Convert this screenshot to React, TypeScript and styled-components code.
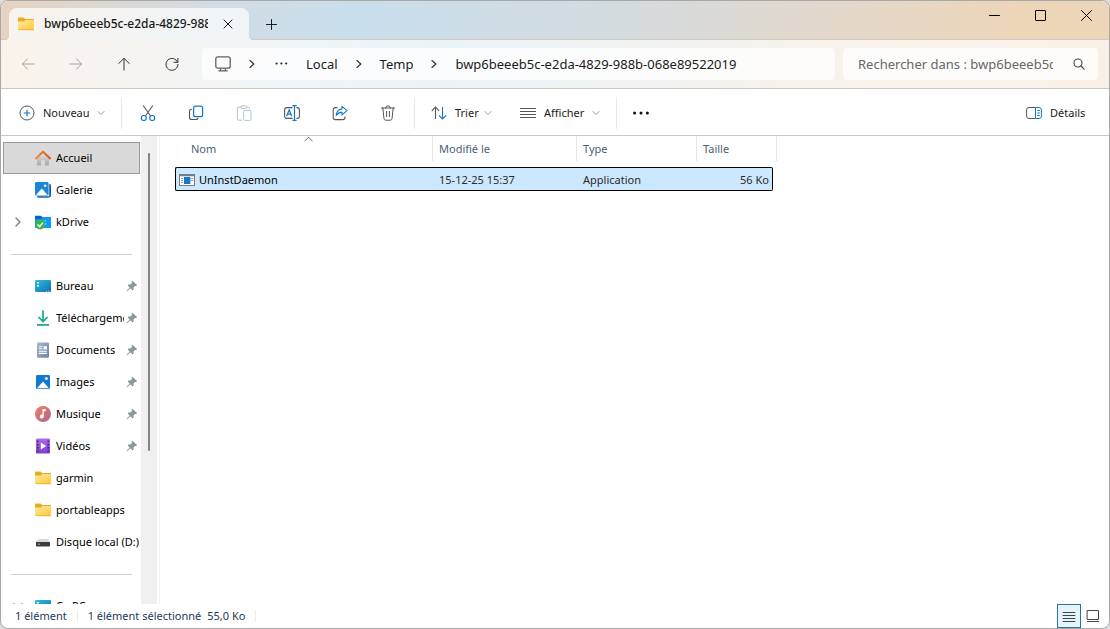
import React from 'react';
import styled, { createGlobalStyle, css } from 'styled-components';

const GlobalStyle = createGlobalStyle`
  * { box-sizing: border-box; }
  body {
    margin: 0;
    background: #dcdde0;
    font-family: 'Noto Sans', 'Open Sans', sans-serif;
    font-size: 11px;
    line-height: 16px;
    color: #1b1b1b;
  }
  button, input { font: inherit; color: inherit; }
  a { color: inherit; text-decoration: none; }
  svg { display: block; flex: none; }
`;

const Window = styled.div`
  display: flex;
  flex-direction: column;
  height: 100vh;
  border: 1px solid #a8a8a8;
  border-radius: 8px;
  overflow: hidden;
  background: #fff;
`;

const PlainButton = styled.button`
  display: flex;
  align-items: center;
  justify-content: center;
  border: 0;
  padding: 0;
  background: none;
`;

/* Title bar */

const TitleBar = styled.header`
  display: flex;
  align-items: flex-end;
  height: 39px;
  flex: none;
  padding-left: 8px;
  border-bottom: 1px solid #d3cbbf;
  background: linear-gradient(100deg, #e6d3c0 0%, #d3dce2 18%, #c8deed 32%, #d3dbdf 55%, #e4d8ca 76%, #edd5b8 92%);
`;

const Tab = styled.div`
  position: relative;
  display: flex;
  align-items: center;
  width: 240px;
  height: 32px;
  margin-bottom: -1px;
  padding: 0 11px 0 9px;
  border-radius: 8px 8px 0 0;
  background: linear-gradient(100deg, #f8f3ed, #f0f4f6 80%);

  &::before, &::after {
    content: '';
    position: absolute;
    bottom: 0;
    width: 4px;
    height: 4px;
  }
  &::before { left: -4px; background: radial-gradient(circle at 0 0, transparent 4px, #f9f3ec 4px); }
  &::after { right: -4px; background: radial-gradient(circle at 100% 0, transparent 4px, #f0f4f6 4px); }
`;

const TabTitle = styled.span`
  flex: 1;
  margin: 0 10px;
  overflow: hidden;
  white-space: nowrap;
  font-size: 12px;
  font-weight: 500;
`;

const TabClose = styled(PlainButton)`
  width: 20px;
  height: 20px;
`;

const NewTab = styled(PlainButton)`
  width: 32px;
  height: 30px;
  margin-left: 6px;
`;

const WindowControls = styled.div`
  display: flex;
  align-self: flex-start;
  margin-left: auto;
`;

const WindowButton = styled(PlainButton)`
  width: 46px;
  height: 28px;
`;

/* Navigation bar */

const NavBar = styled.nav`
  display: flex;
  align-items: center;
  flex: none;
  height: 49px;
  padding: 0 11px;
  border-bottom: 1px solid #cfc8be;
  background: linear-gradient(100deg, #faf3eb 0%, #f2f4f5 20%, #ebf3f7 38%, #f1f2f2 58%, #f8f2eb 78%, #f9f1e8 100%);
`;

const NavButtons = styled.div`
  display: flex;
  gap: 16px;
  margin-right: 14px;
`;

const NavButton = styled(PlainButton)`
  width: 32px;
  height: 32px;
  color: #333;
  &:disabled { color: #a9a6a3; }
`;

const fieldBox = css`
  display: flex;
  align-items: center;
  height: 32px;
  border-radius: 4px;
  background: rgba(255, 255, 255, 0.75);
  font-size: 13px;
`;

const AddressBar = styled.div`
  ${fieldBox}
  flex: 1;
  min-width: 0;
  gap: 17px;
  padding-left: 13px;
  white-space: nowrap;
  overflow: hidden;
`;

const SearchBox = styled.label`
  ${fieldBox}
  width: 255px;
  margin-left: 8px;
  padding: 0 13px 0 15px;
  gap: 20px;
  color: #5f5f5f;
`;

const SearchInput = styled.input`
  flex: 1;
  min-width: 0;
  border: 0;
  padding: 0;
  outline: 0;
  background: none;
  &::placeholder { color: #666; opacity: 1; }
`;

/* Command bar */

const CommandBar = styled.div`
  display: flex;
  align-items: center;
  flex: none;
  height: 47px;
  padding: 2px 14px 0 10px;
  border-bottom: 1px solid #cfc8be;
  background: #fff;
`;

const MenuButton = styled.button<{ $width: number }>`
  display: flex;
  align-items: center;
  gap: 8px;
  width: ${(p) => p.$width}px;
  height: 32px;
  border: 0;
  padding: 0 8px;
  background: none;
  white-space: nowrap;
`;

const MenuLabel = styled.span`
  flex: 1;
  min-width: 0;
  text-align: left;
`;

const ViewMenus = styled.div`
  display: flex;
  gap: 12px;
`;

const Separator = styled.span`
  width: 1px;
  height: 32px;
  margin: 0 8px;
  background: #e8e8e8;
`;

const Tools = styled.div`
  display: flex;
  gap: 16px;
  margin: 0 2px;
`;

const ToolButton = styled(PlainButton)`
  width: 32px;
  height: 32px;
`;

const DetailsSlot = styled.div`
  margin-left: auto;
`;

/* Body */

const Body = styled.div`
  display: flex;
  flex: 1;
  min-height: 0;
`;

const Sidebar = styled.aside`
  display: flex;
  width: 159px;
  flex: none;
  border-right: 1px solid #f3f3f3;
  overflow: hidden;
`;

const Tree = styled.ul`
  flex: 1;
  min-width: 0;
  margin: 0;
  padding: 6px 1px 0 2px;
  list-style: none;
`;

const TreeItem = styled.li<{ $selected?: boolean }>`
  display: flex;
  align-items: center;
  height: 32px;
  padding-left: 8px;
  border: 1px solid ${(p) => (p.$selected ? '#999' : 'transparent')};
  background: ${(p) => (p.$selected ? '#d9d9d9' : 'none')};
`;

const Expander = styled.span`
  width: 23px;
  flex: none;
`;

const TreeLink = styled.a`
  display: flex;
  align-items: center;
  flex: 1;
  min-width: 0;
  gap: 5px;
  color: #000;
`;

const TreeLabel = styled.span`
  flex: 1;
  overflow: hidden;
  white-space: nowrap;
`;

const PinSlot = styled.span`
  margin: 0 1px 0 2px;
`;

const TreeDivider = styled.li`
  height: 32px;
  padding: 16px 8px 0;
  &::before {
    content: '';
    display: block;
    height: 1px;
    background: #cfcfcf;
  }
`;

const ScrollTrack = styled.div`
  width: 16px;
  margin-right: 2px;
  padding: 17px 7px 0;
  background: #f0f0f0;
`;

const ScrollThumb = styled.div`
  height: 66%;
  border-radius: 1px;
  background: #858585;
`;

const Content = styled.main`
  flex: 1;
  min-width: 0;
  padding-left: 15px;
`;

const FileTable = styled.table`
  width: 602px;
  table-layout: fixed;
  border-collapse: separate;
  border-spacing: 0;
`;

const HeadCell = styled.th<{ $indent?: number }>`
  position: relative;
  height: 25px;
  padding: 0 0 0 ${(p) => p.$indent ?? 6}px;
  border-right: 1px solid #e5e5e5;
  text-align: left;
  font-weight: 400;
  color: #4c607a;
`;

const SortMark = styled.span`
  position: absolute;
  top: 0;
  left: 129px;
`;

const Spacer = styled.tr`
  height: 6px;
  td { padding: 0; }
`;

const FileRow = styled.tr`
  td {
    height: 24px;
    padding: 1px 0 0 6px;
    border: solid #000;
    border-width: 1px 0;
    background: #cce8ff;
    color: #2b2b2b;
  }
  td:first-child {
    padding-left: 3px;
    border-left-width: 1px;
    border-radius: 2px 0 0 2px;
    color: #000;
  }
  td:last-child {
    padding-right: 3px;
    border-right-width: 1px;
    border-radius: 0 2px 2px 0;
    text-align: right;
  }
`;

const FileName = styled.span`
  display: flex;
  align-items: center;
  gap: 4px;
`;

/* Status bar */

const StatusBar = styled.footer`
  display: flex;
  align-items: center;
  flex: none;
  height: 24px;
  padding: 0 4px 0 14px;
  color: #1e395b;
`;

const StatusText = styled.span`
  display: flex;
  gap: 6px;
  padding-right: 10px;
  margin-right: 10px;
  border-right: 1px solid #ededed;
  line-height: 12px;
  white-space: nowrap;
`;

const ViewSwitch = styled.div`
  display: flex;
  margin-left: auto;
`;

const ViewButton = styled(PlainButton)<{ $active?: boolean }>`
  width: 24px;
  height: 24px;
  border: 1px solid ${(p) => (p.$active ? '#2673ab' : 'transparent')};
  background: ${(p) => (p.$active ? '#e5f3fb' : 'none')};
`;

/* Icons */

type StrokeProps = { d: string; size?: number; color?: string; width?: number };
const Stroke = ({ d, size = 16, color = 'currentColor', width = 1 }: StrokeProps) => (
  <svg width={size} height={size} viewBox={`0 0 ${size} ${size}`} fill="none" stroke={color} strokeWidth={width} strokeLinecap="round" strokeLinejoin="round">
    <path d={d} />
  </svg>
);

const INK = '#555';
const BLUE = '#0f78c8';

const Chevron = () => <Stroke size={8} d="M2 0.5 L5.8 4 L2 7.5" color="#333" width={1.2} />;
const DownChevron = () => <Stroke size={8} d="M1 2.5 L4 5.5 L7 2.5" color="#999" />;

const Dots = () => (
  <svg width="16" height="16" viewBox="0 0 16 16" fill="#222">
    <circle cx="3.6" cy="7.5" r="1.1" /><circle cx="8.4" cy="7.5" r="1.1" /><circle cx="13.2" cy="7.5" r="1.1" />
  </svg>
);

const BigDots = () => (
  <svg width="16" height="16" viewBox="0 0 16 16" fill="#111">
    <circle cx="1.6" cy="8" r="1.5" /><circle cx="8" cy="8" r="1.5" /><circle cx="14.4" cy="8" r="1.5" />
  </svg>
);

const FolderIcon = () => (
  <svg width="16" height="16" viewBox="0 0 16 16">
    <defs>
      <linearGradient id="folder" x1="0" y1="0" x2="1" y2="1">
        <stop offset="0" stopColor="#ffe9a2" /><stop offset="1" stopColor="#ffc937" />
      </linearGradient>
    </defs>
    <path d="M0 2.4 Q0 1.5 1 1.5 H5.4 L7.2 3 H15 Q16 3 16 4 V8 H0 Z" fill="#e8ae22" />
    <path d="M0 5.4 H6 L7.6 4 H15.2 Q16 4 16 4.9 V13 Q16 14 15 14 H1 Q0 14 0 13 Z" fill="url(#folder)" />
    <path d="M0.5 13.7 H15.5" stroke="#dfa42a" strokeWidth="0.7" />
  </svg>
);

const MonitorIcon = () => (
  <svg width="16" height="16" viewBox="0 0 16 16" fill="none" stroke="#606060" strokeWidth="1.3">
    <rect x="0.8" y="0.8" width="14.4" height="11.4" rx="2" />
    <path d="M5.5 12.5 V14.6 M10.5 12.5 V14.6 M3.4 14.9 H12.6" />
  </svg>
);

const RefreshIcon = () => <Stroke d="M13.6 6.2 A6 6 0 1 0 14 8.4 M13.9 2.4 V6.3 H10" />;

const SearchIcon = () => (
  <svg width="12" height="12" viewBox="0 0 12 12" fill="none" stroke="#444" strokeWidth="1.1" strokeLinecap="round">
    <circle cx="5" cy="5" r="4" /><path d="M8 8 L11.2 11.2" />
  </svg>
);

const PlusCircle = () => (
  <svg width="16" height="16" viewBox="0 0 16 16" fill="none">
    <circle cx="8" cy="8" r="7" stroke={INK} /><path d="M8 4.8 V11.2 M4.8 8 H11.2" stroke={BLUE} strokeWidth="1.2" />
  </svg>
);

const CutIcon = () => (
  <svg width="16" height="16" viewBox="0 0 16 16" fill="none">
    <path d="M3.2 0.5 L10.6 11 M12.8 0.5 L5.4 11" stroke={INK} strokeWidth="1.1" />
    <circle cx="3.8" cy="13" r="2.5" stroke={BLUE} strokeWidth="1.2" /><circle cx="12.2" cy="13" r="2.5" stroke={BLUE} strokeWidth="1.2" />
  </svg>
);

const CopyIcon = () => (
  <svg width="16" height="16" viewBox="0 0 16 16" fill="none">
    <path d="M4 4.2 H3.3 Q1.5 4.4 1.5 6.2 V12.2 Q1.5 14.5 3.7 14.5 H8 Q9.6 14.5 10 13" stroke={INK} strokeWidth="1.1" />
    <rect x="5.6" y="1.1" width="9" height="10.6" rx="2" stroke={BLUE} strokeWidth="1.2" />
  </svg>
);

const PasteIcon = () => (
  <svg width="16" height="16" viewBox="0 0 16 16" fill="none">
    <path d="M4.8 2.2 H2.5 Q1.4 2.2 1.4 3.3 V14 Q1.4 15.2 2.6 15.2 H6 M10.8 2.2 H12.4 Q13.5 2.2 13.5 3.5 V4.6" stroke="#bdbdbd" />
    <rect x="4.8" y="0.8" width="6" height="2.6" rx="1.2" stroke="#bdbdbd" />
    <rect x="7.6" y="5.4" width="7.4" height="10" rx="1.2" stroke="#a3cbea" />
  </svg>
);

const RenameIcon = () => (
  <svg width="16" height="16" viewBox="0 0 16 16" fill="none">
    <path d="M8.6 2.6 H2.8 Q0.6 2.6 0.6 5 V11 Q0.6 13.4 2.8 13.4 H8.6 M12.4 2.6 H13.2 Q15.4 2.6 15.4 5 V11 Q15.4 13.4 13.2 13.4 H12.4" stroke={INK} strokeWidth="1.1" />
    <path d="M8.4 0.6 H12.6 M8.4 15.4 H12.6 M10.5 0.6 V15.4" stroke={BLUE} strokeWidth="1.2" />
    <path d="M2.6 11.2 L5.2 4.8 L7.8 11.2 M3.5 9.2 H6.9" stroke={BLUE} strokeWidth="1.2" />
  </svg>
);

const ShareIcon = () => (
  <svg width="16" height="16" viewBox="0 0 16 16" fill="none" strokeLinejoin="round">
    <path d="M5.5 2.6 H3.6 Q1.2 2.6 1.2 5 V12.2 Q1.2 14.6 3.6 14.6 H10.6 Q13 14.6 13 12.2 V11.4" stroke={INK} strokeWidth="1.1" />
    <path d="M10 1.4 L15 5.6 L10 9.8 V7.4 Q6.4 7.2 4.2 10.4 Q4.6 4.6 10 3.9 Z" stroke={BLUE} strokeWidth="1.1" />
  </svg>
);

const TrashIcon = () => (
  <Stroke color={INK} d="M1.5 3 H14.5 M5.6 3 Q5.8 0.8 8 0.8 Q10.2 0.8 10.4 3 M2.8 3 L4 13.6 Q4.2 15.2 5.6 15.2 H10.4 Q11.8 15.2 12 13.6 L13.2 3 M6.6 6.4 V11.6 M9.4 6.4 V11.6" />
);

const SortIcon = () => (
  <svg width="16" height="16" viewBox="0 0 16 16" fill="none" strokeWidth="1.1">
    <path d="M4.5 14 V2 M0.8 5.8 L4.5 2 L8 5.8" stroke={INK} />
    <path d="M11.5 2 V14 M8 10.4 L11.5 14 L15.2 10.4" stroke={BLUE} />
  </svg>
);

const LinesIcon = () => (
  <svg width="16" height="16" viewBox="0 0 16 16" stroke={INK}>
    <path d="M0 3.5 H16 M0 6.5 H16 M0 9.5 H16 M0 12.5 H16" />
  </svg>
);

const DetailsIcon = () => (
  <svg width="16" height="16" viewBox="0 0 16 16" fill="none">
    <path d="M9.5 2.5 H3 Q0.6 2.5 0.6 4.8 V11.2 Q0.6 13.5 3 13.5 H9.5" stroke={INK} />
    <path d="M9.5 2.5 H13 Q15.4 2.5 15.4 4.8 V11.2 Q15.4 13.5 13 13.5 H9.5 Z M11.2 5.5 H13.8 M11.2 8 H13.8 M11.2 10.5 H13.8" stroke={BLUE} />
  </svg>
);

const HomeIcon = () => (
  <svg width="16" height="16" viewBox="0 0 16 16" fill="none">
    <defs>
      <linearGradient id="roof" x1="0" x2="1"><stop offset="0" stopColor="#f08a3c" /><stop offset="1" stopColor="#cf5a25" /></linearGradient>
      <linearGradient id="wall" x1="0" y1="0" x2="0" y2="1"><stop offset="0" stopColor="#e6e6e6" /><stop offset="1" stopColor="#a8a8a8" /></linearGradient>
    </defs>
    <path d="M2 7.5 L8 2.2 L14 7.5 V15 Q14 15.6 13.4 15.6 H10 V10 H6 V15.6 H2.6 Q2 15.6 2 15 Z" fill="url(#wall)" />
    <path d="M0.9 8.4 L8 1.8 L15.1 8.4" stroke="url(#roof)" strokeWidth="2.1" strokeLinecap="round" strokeLinejoin="round" />
  </svg>
);

const GalleryIcon = () => (
  <svg width="16" height="16" viewBox="0 0 16 16">
    <path d="M14.2 1.8 Q16 2 16 3.6 V13 Q16 15.8 13 15.8 H3.5 Q2 15.8 1.8 14.2 H14.2 Z" fill="#0e5ea8" />
    <rect width="13.6" height="13.6" rx="1.4" fill="#1b86d6" />
    <path d="M1 13 L6.8 6.6 L12.6 13 Z" fill="#fff" /><circle cx="10.2" cy="3.8" r="1.4" fill="#dff1ff" />
  </svg>
);

const KDriveIcon = () => (
  <svg width="16" height="16" viewBox="0 0 16 16" fill="none">
    <path d="M0 1.8 H6 L7.5 3.2 H16 V14 H0 Z" fill="#0a62c4" />
    <path d="M0 5 H6 L8 3.6 H15.2 Q16 3.6 16 4.4 V13.2 Q16 14 15.2 14 H0 Z" fill="#0c99ff" />
    <circle cx="5.2" cy="10.4" r="5" fill="#39b54a" />
    <path d="M2.6 10.6 L4.6 12.6 L8 8.6" stroke="#fff" strokeWidth="1.4" />
    <path d="M9.8 7 H10.8 M10.2 10 H11.2" stroke="#d8f0ff" />
  </svg>
);

const DesktopIcon = () => (
  <svg width="16" height="16" viewBox="0 0 16 16">
    <defs><linearGradient id="desk" x1="0" y1="0" x2="1" y2="1"><stop offset="0" stopColor="#31c0d8" /><stop offset="1" stopColor="#0f6fb5" /></linearGradient></defs>
    <rect y="2" width="16" height="12" rx="1.2" fill="url(#desk)" />
    <path d="M2 4 H4 V5.6 H2 Z M2 7 H4 V8.6 H2 Z" fill="#dffaff" />
    <path d="M11 13.2 H12 M13 13.2 H14" stroke="#c4ecfa" strokeWidth="0.9" />
  </svg>
);

const DownloadIcon = () => (
  <svg width="16" height="16" viewBox="0 0 16 16" fill="none" stroke="#16a98c" strokeWidth="1.7">
    <path d="M8 0.5 V11.4 M3.4 7 L8 11.5 L12.6 7 M2 14.8 H14" />
  </svg>
);

const DocumentIcon = () => (
  <svg width="16" height="16" viewBox="0 0 16 16" fill="none">
    <defs><linearGradient id="doc" x1="0" y1="0" x2="1" y2="1"><stop offset="0" stopColor="#a9b9cc" /><stop offset="1" stopColor="#6d84a3" /></linearGradient></defs>
    <rect x="2" y="0.4" width="12" height="15.4" rx="1.2" fill="url(#doc)" />
    <path d="M4 4.8 H7.4 M4 6.8 H7.4 M4 9.2 H12 M4 11.4 H12" stroke="#fff" strokeWidth="1.1" />
    <path d="M8.6 4.2 H12 V7.4 H8.6 Z" fill="#fff" />
  </svg>
);

const ImageIcon = () => (
  <svg width="16" height="16" viewBox="0 0 16 16">
    <rect x="1" y="1" width="14" height="14" rx="1.2" fill="#1179cf" />
    <path d="M2 14.2 L8 7.6 L14 14.2 Z" fill="#fff" /><circle cx="11.4" cy="4.6" r="1.5" fill="#d6eeff" />
  </svg>
);

const MusicIcon = () => (
  <svg width="16" height="16" viewBox="0 0 16 16">
    <defs><linearGradient id="music" x1="0" y1="0" x2="1" y2="1"><stop offset="0" stopColor="#ee8459" /><stop offset="1" stopColor="#b2609c" /></linearGradient></defs>
    <circle cx="8" cy="8" r="8" fill="url(#music)" />
    <path d="M7.4 3 H10.6 V5.2 H8.8 V10.6 A2 2 0 1 1 7.4 8.7 Z" fill="#fff" />
  </svg>
);

const VideoIcon = () => (
  <svg width="16" height="16" viewBox="0 0 16 16">
    <defs><linearGradient id="video" x1="0" y1="0" x2="0" y2="1"><stop offset="0" stopColor="#b06be6" /><stop offset="1" stopColor="#7a3fd0" /></linearGradient></defs>
    <rect x="1" y="0.4" width="14" height="15.2" rx="1.2" fill="url(#video)" />
    <path d="M2 2.4 H3.6 V4 H2 Z M2 5.8 H3.6 V7.4 H2 Z M2 9 H3.6 V10.6 H2 Z M2 12.2 H3.6 V13.8 H2 Z M12.4 2.4 H14 V4 H12.4 Z M12.4 5.8 H14 V7.4 H12.4 Z M12.4 9 H14 V10.6 H12.4 Z M12.4 12.2 H14 V13.8 H12.4 Z" fill="#4a1e94" />
    <path d="M5.8 4.6 L11.2 8 L5.8 11.4 Z" fill="#fff" />
  </svg>
);

const DriveIcon = () => (
  <svg width="16" height="16" viewBox="0 0 16 16">
    <path d="M3.2 5 H12.8 L15 8.2 H1 Z" fill="#d9d9d9" />
    <rect x="1" y="8" width="14" height="4.4" rx="0.6" fill="#3c3c3c" /><rect x="3" y="9.6" width="2" height="1.2" fill="#43d45b" />
  </svg>
);

const PinIcon = () => (
  <svg width="12" height="12" viewBox="0 0 12 12">
    <path d="M6.6 0.8 L11.2 5.2 L10 6 L8.8 6.2 L7.4 7.8 L7.6 9.6 L6.6 10.4 L4.4 8.2 L1.2 11.2 L0.6 11.2 L0.8 10.6 L3.6 7.4 L1.6 5.2 L2.4 4.4 L4.2 4.6 L5.8 3.2 L5.8 1.8 Z" fill="#8b979f" />
  </svg>
);

const AppIcon = () => (
  <svg width="16" height="16" viewBox="0 0 16 16">
    <rect x="0.5" y="2.5" width="15" height="11" fill="#fff" stroke="#7b7b7b" />
    <path d="M0.5 3.5 H15.5" stroke="#7b7b7b" strokeWidth="1.6" />
    <rect x="5" y="5" width="6.4" height="7" fill="#1478c9" />
    <path d="M2 6.5 H4 M2 8.5 H4 M2 10.5 H4 M12.2 6.5 H14.2 M12.2 8.5 H14.2" stroke="#9a9a9a" />
  </svg>
);

/* Data */

type Place = { label: string; icon: () => React.ReactElement; pinned?: boolean; selected?: boolean; expand?: 'right' | 'down' };

const groups: Place[][] = [
  [
    { label: 'Accueil', icon: HomeIcon, selected: true },
    { label: 'Galerie', icon: GalleryIcon },
    { label: 'kDrive', icon: KDriveIcon, expand: 'right' },
  ],
  [
    { label: 'Bureau', icon: DesktopIcon, pinned: true },
    { label: 'Téléchargements', icon: DownloadIcon, pinned: true },
    { label: 'Documents', icon: DocumentIcon, pinned: true },
    { label: 'Images', icon: ImageIcon, pinned: true },
    { label: 'Musique', icon: MusicIcon, pinned: true },
    { label: 'Vidéos', icon: VideoIcon, pinned: true },
    { label: 'garmin', icon: FolderIcon },
    { label: 'portableapps', icon: FolderIcon },
    { label: 'Disque local (D:)', icon: DriveIcon },
  ],
  [{ label: 'Ce PC', icon: DesktopIcon, expand: 'down' }],
];

const TreeRow = ({ place }: { place: Place }) => (
  <TreeItem $selected={place.selected}>
    <Expander>
      {place.expand === 'right' && <Stroke size={12} d="M4 2 L8 6 L4 10" color="#808080" width={1.4} />}
      {place.expand === 'down' && <Stroke size={12} d="M2 4 L6 8 L10 4" color="#555" width={1.4} />}
    </Expander>
    <TreeLink href="#">
      <place.icon />
      <TreeLabel>{place.label}</TreeLabel>
    </TreeLink>
    {place.pinned && <PinSlot><PinIcon /></PinSlot>}
  </TreeItem>
);

const folder = 'bwp6beeeb5c-e2da-4829-988b-068e89522019';

export default function App() {
  return (
    <>
      <GlobalStyle />
      <Window>
        <TitleBar>
          <Tab>
            <FolderIcon />
            <TabTitle>{folder}</TabTitle>
            <TabClose aria-label="Fermer l’onglet"><Stroke size={10} d="M1 1 L9 9 M9 1 L1 9" /></TabClose>
          </Tab>
          <NewTab aria-label="Nouvel onglet"><Stroke size={11} d="M5.5 0.5 V10.5 M0.5 5.5 H10.5" /></NewTab>
          <WindowControls>
            <WindowButton aria-label="Réduire"><Stroke size={11} d="M0.5 5.5 H10.5" color="#000" /></WindowButton>
            <WindowButton aria-label="Agrandir"><Stroke size={11} d="M0.5 1 V10 Q0.5 10.5 1 10.5 H10 Q10.5 10.5 10.5 10 V1 Q10.5 0.5 10 0.5 H1 Q0.5 0.5 0.5 1" color="#000" /></WindowButton>
            <WindowButton aria-label="Fermer"><Stroke size={11} d="M0.5 0.5 L10.5 10.5 M10.5 0.5 L0.5 10.5" color="#000" /></WindowButton>
          </WindowControls>
        </TitleBar>

        <NavBar>
          <NavButtons>
            <NavButton disabled aria-label="Précédent"><Stroke d="M14 8 H2.5 M7.5 3 L2.2 8 L7.5 13" /></NavButton>
            <NavButton disabled aria-label="Suivant"><Stroke d="M2 8 H13.5 M8.5 3 L13.8 8 L8.5 13" /></NavButton>
            <NavButton aria-label="Dossier parent"><Stroke d="M8 14 V2.5 M2.8 7.5 L8 2.2 L13.2 7.5" /></NavButton>
            <NavButton aria-label="Actualiser"><RefreshIcon /></NavButton>
          </NavButtons>
          <AddressBar>
            <MonitorIcon />
            <Chevron />
            <Dots />
            <a href="#">Local</a>
            <Chevron />
            <a href="#">Temp</a>
            <Chevron />
            <a href="#">{folder}</a>
          </AddressBar>
          <SearchBox>
            <SearchInput type="text" aria-label="Rechercher" placeholder={`Rechercher dans : ${folder}`} />
            <SearchIcon />
          </SearchBox>
        </NavBar>

        <CommandBar>
          <MenuButton $width={102}><PlusCircle /><MenuLabel>Nouveau</MenuLabel><DownChevron /></MenuButton>
          <Separator />
          <Tools>
            <ToolButton aria-label="Couper"><CutIcon /></ToolButton>
            <ToolButton aria-label="Copier"><CopyIcon /></ToolButton>
            <ToolButton aria-label="Coller" disabled><PasteIcon /></ToolButton>
            <ToolButton aria-label="Renommer"><RenameIcon /></ToolButton>
            <ToolButton aria-label="Partager"><ShareIcon /></ToolButton>
            <ToolButton aria-label="Supprimer"><TrashIcon /></ToolButton>
          </Tools>
          <Separator />
          <ViewMenus>
            <MenuButton $width={77}><SortIcon /><MenuLabel>Trier</MenuLabel><DownChevron /></MenuButton>
            <MenuButton $width={96}><LinesIcon /><MenuLabel>Afficher</MenuLabel><DownChevron /></MenuButton>
          </ViewMenus>
          <Separator />
          <ToolButton aria-label="Plus"><BigDots /></ToolButton>
          <DetailsSlot>
            <MenuButton $width={77}><DetailsIcon /><MenuLabel>Détails</MenuLabel></MenuButton>
          </DetailsSlot>
        </CommandBar>

        <Body>
          <Sidebar>
            <Tree>
              {groups.map((group, i) => (
                <React.Fragment key={i}>
                  {i > 0 && <TreeDivider />}
                  {group.map((place) => <TreeRow key={place.label} place={place} />)}
                </React.Fragment>
              ))}
            </Tree>
            <ScrollTrack><ScrollThumb /></ScrollTrack>
          </Sidebar>
          <Content>
            <FileTable>
              <colgroup>
                <col width="258" /><col width="144" /><col width="120" /><col width="76" /><col width="4" />
              </colgroup>
              <thead>
                <tr>
                  <HeadCell $indent={16}>
                    Nom
                    <SortMark><Stroke size={9} d="M0.8 5 L4.5 1.2 L8.2 5" color="#666" /></SortMark>
                  </HeadCell>
                  <HeadCell>Modifié le</HeadCell>
                  <HeadCell>Type</HeadCell>
                  <HeadCell colSpan={2}>Taille</HeadCell>
                </tr>
              </thead>
              <tbody>
                <Spacer><td colSpan={5} /></Spacer>
                <FileRow>
                  <td><FileName><AppIcon />UnInstDaemon</FileName></td>
                  <td>15-12-25 15:37</td>
                  <td>Application</td>
                  <td>56 Ko</td>
                </FileRow>
              </tbody>
            </FileTable>
          </Content>
        </Body>

        <StatusBar>
          <StatusText>1 élément</StatusText>
          <StatusText><span>1 élément sélectionné</span><span>55,0 Ko</span></StatusText>
          <ViewSwitch>
            <ViewButton $active aria-label="Détails"><Stroke size={14} d="M1 3.5 H13 M1 6.5 H13 M1 9.5 H13 M1 12.5 H13" color="#444" /></ViewButton>
            <ViewButton aria-label="Grandes icônes"><Stroke size={14} d="M1.5 1.5 H12.5 V10.5 H1.5 Z M1.5 12.5 H12.5" color="#444" /></ViewButton>
          </ViewSwitch>
        </StatusBar>
      </Window>
    </>
  );
}
